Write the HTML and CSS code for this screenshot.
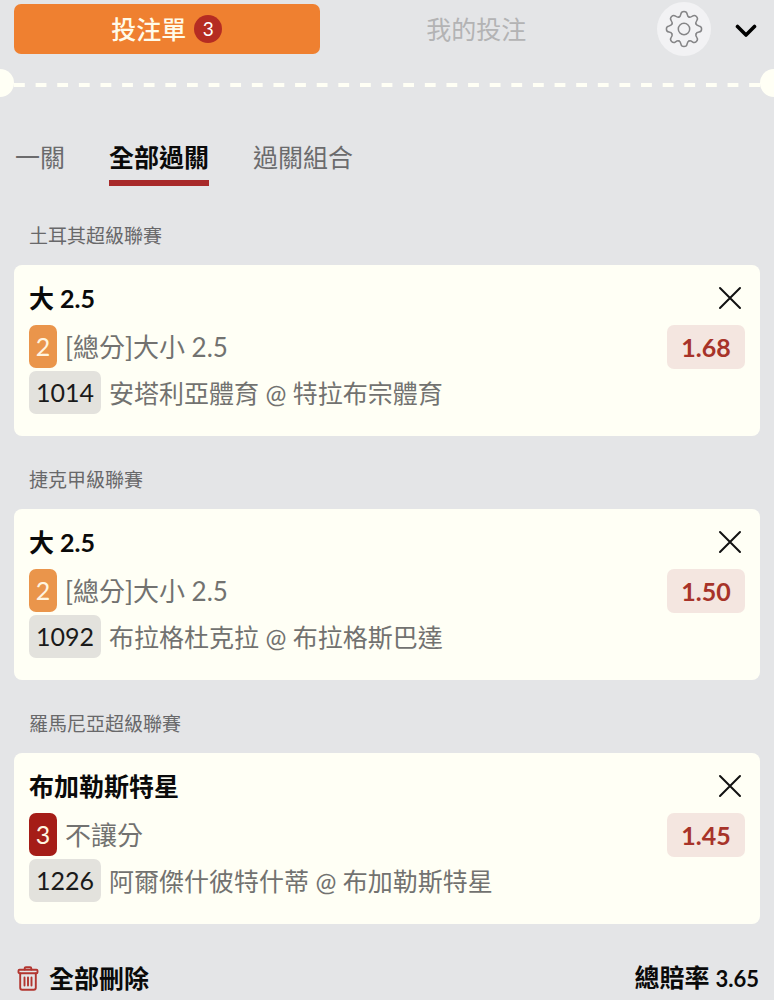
FILE: index.html
```
<!DOCTYPE html>
<html lang="zh-Hant">
<head>
<meta charset="utf-8">
<meta name="viewport" content="width=device-width, initial-scale=1">
<title>投注單</title>
<link rel="stylesheet" href="styles.css">
</head>
<body>
<header class="topbar">
  <button class="main-tab main-tab-active" type="button">投注單<span class="count">3</span></button>
  <button class="main-tab" type="button">我的投注</button>
  <div class="tools">
    <button class="settings" type="button" aria-label="設定">
      <svg width="38" height="38" viewBox="-19 -19 38 38" fill="none" stroke="#858587" stroke-width="1.5" stroke-linecap="round">
        <defs><path id="tooth" d="M-5 -12C-3.600 -12.500 -3.400 -13.400 -3.100 -15C-2.800 -17 -1.800 -17.600 0 -17.600C1.800 -17.600 2.800 -17 3.100 -15C3.400 -13.400 3.600 -12.500 5 -12"/></defs>
        <use href="#tooth"/>
        <use href="#tooth" transform="rotate(45)"/>
        <use href="#tooth" transform="rotate(90)"/>
        <use href="#tooth" transform="rotate(135)"/>
        <use href="#tooth" transform="rotate(180)"/>
        <use href="#tooth" transform="rotate(225)"/>
        <use href="#tooth" transform="rotate(270)"/>
        <use href="#tooth" transform="rotate(315)"/>
        <circle r="5.700"/>
      </svg>
    </button>
    <button class="collapse" type="button" aria-label="收合">
      <svg width="22" height="14" viewBox="0 0 22 14" fill="none" stroke="#000" stroke-width="3.600" stroke-linecap="round" stroke-linejoin="round"><path d="M2.500 2.500L11 11L19.500 2.500"/></svg>
    </button>
  </div>
</header>

<div class="tear">
  <svg class="tear-line" width="100%" height="4"><line x1="0" y1="2" x2="100%" y2="2" pathLength="69" stroke="#fffff5" stroke-width="4" stroke-dasharray="1 1"/></svg>
</div>

<nav class="modes">
  <button class="mode" type="button">一關</button>
  <button class="mode mode-active" type="button">全部過關</button>
  <button class="mode" type="button">過關組合</button>
</nav>

<main>
  <section>
    <h2 class="league">土耳其超級聯賽</h2>
    <article class="card">
      <div class="row row-title"><h3 class="pick">大 2.5</h3>
        <button class="close" type="button" aria-label="移除"><svg width="24" height="24" viewBox="0 0 24 24" stroke="#111" stroke-width="2" stroke-linecap="round"><path d="M2 2L22 22M22 2L2 22"/></svg></button></div>
      <div class="row"><span class="tag tag-orange">2</span><span class="market">[總分]大小 2.5</span><span class="odds">1.68</span></div>
      <div class="row row-match"><span class="code">1014</span><span class="match">安塔利亞體育 @ 特拉布宗體育</span></div>
    </article>
  </section>
  <section>
    <h2 class="league">捷克甲級聯賽</h2>
    <article class="card">
      <div class="row row-title"><h3 class="pick">大 2.5</h3>
        <button class="close" type="button" aria-label="移除"><svg width="24" height="24" viewBox="0 0 24 24" stroke="#111" stroke-width="2" stroke-linecap="round"><path d="M2 2L22 22M22 2L2 22"/></svg></button></div>
      <div class="row"><span class="tag tag-orange">2</span><span class="market">[總分]大小 2.5</span><span class="odds">1.50</span></div>
      <div class="row row-match"><span class="code">1092</span><span class="match">布拉格杜克拉 @ 布拉格斯巴達</span></div>
    </article>
  </section>
  <section>
    <h2 class="league">羅馬尼亞超級聯賽</h2>
    <article class="card">
      <div class="row row-title"><h3 class="pick">布加勒斯特星</h3>
        <button class="close" type="button" aria-label="移除"><svg width="24" height="24" viewBox="0 0 24 24" stroke="#111" stroke-width="2" stroke-linecap="round"><path d="M2 2L22 22M22 2L2 22"/></svg></button></div>
      <div class="row"><span class="tag tag-red">3</span><span class="market">不讓分</span><span class="odds">1.45</span></div>
      <div class="row row-match"><span class="code">1226</span><span class="match">阿爾傑什彼特什蒂 @ 布加勒斯特星</span></div>
    </article>
  </section>
</main>

<footer class="summary">
  <button class="clear" type="button">
    <svg width="22" height="25" viewBox="0 0 22 25" fill="none" stroke="#b23630" stroke-width="1.900" stroke-linejoin="round" stroke-linecap="round">
      <rect x="1.500" y="3.800" width="19" height="3.400" rx="1"/><path d="M7.700 3.500V2.400Q7.700 1.200 8.900 1.200H13.100Q14.300 1.200 14.300 2.400V3.500M3.200 7.500V21.800Q3.200 23.800 5.200 23.800H16.800Q18.800 23.800 18.800 21.800V7.500M7.500 11.500V19.500M11 11.500V19.500M14.500 11.500V19.500"/>
    </svg>全部刪除</button>
  <p class="total">總賠率 <span class="total-value">3.65</span></p>
</footer>
</body>
</html>
```
FILE: styles.css
```
* { box-sizing: border-box; }

body {
  margin: 0;
  background: #e4e5e7;
  color: #0a0a0a;
  font-family: Lato, "Noto Sans CJK TC", sans-serif;
  font-size: 25px;
  line-height: 38px;
}

button {
  margin: 0;
  padding: 0;
  border: 0;
  background: none;
  color: inherit;
  font: inherit;
  cursor: pointer;
}

svg { display: block; }
h2, h3, p { margin: 0; }

.topbar {
  display: flex;
  align-items: center;
  gap: 4px;
  padding: 2px 15px 0 14px;
}

.main-tab {
  flex: 1;
  display: flex;
  align-items: center;
  justify-content: center;
  gap: 8px;
  height: 50px;
  border-radius: 7px;
  color: #b3b3b4;
}

.main-tab-active {
  background: #ef8030;
  color: #fffbe9;
  font-weight: 500;
}

.count {
  width: 28px;
  height: 28px;
  border-radius: 50%;
  background: #b52c22;
  color: #fff;
  font-size: 19px;
  font-weight: 400;
  line-height: 28px;
}

.tools {
  display: flex;
  align-items: center;
  gap: 24px;
  padding-left: 24px;
}

.settings {
  display: grid;
  place-items: center;
  width: 54px;
  height: 54px;
  border-radius: 50%;
  background: #f2f2f4;
}

.collapse { padding: 3px 2px 0 0; }

.tear {
  position: relative;
  margin-top: 13px;
  padding: 14px 14px 11px;
  overflow: hidden;
}

.tear::before,
.tear::after {
  content: "";
  position: absolute;
  top: 0;
  width: 28px;
  height: 28px;
  border-radius: 50%;
  background: #fffff5;
}

.tear::before { left: -14px; }
.tear::after { right: -14px; }

.modes {
  display: flex;
  gap: 44px;
  padding: 40px 15px 0;
}

.mode {
  height: 48px;
  padding-bottom: 4px;
  border-bottom: 6px solid transparent;
  color: #6b6b6d;
}

.mode-active {
  border-color: #a82a2a;
  color: #0a0a0a;
  font-weight: 700;
}

main { padding: 6px 14px 0; }

.league {
  padding: 30px 15px 15px;
  color: #68686a;
  font-size: 19px;
  font-weight: 400;
  line-height: 28px;
}

.card {
  padding: 14px 15px 22px;
  border-radius: 8px;
  background: #fffff5;
}

.row {
  display: flex;
  align-items: center;
  gap: 8px;
  height: 43px;
}

.row-title {
  justify-content: space-between;
  height: 38px;
  margin-bottom: 8px;
}

.row-match { margin-top: 3px; }

.pick {
  font-size: 25px;
  font-weight: 700;
}

.close { padding: 3px; }

.tag,
.code {
  height: 43px;
  border-radius: 7px;
  line-height: 43px;
  text-align: center;
}

.tag {
  width: 28px;
  color: #fff5e0;
}

.tag-orange { background: #ea954b; }
.tag-red { background: #a51d17; }

.code {
  padding: 0 7px;
  background: #e3e2dd;
  color: #1a1a1a;
}

.market,
.match { color: #727270; }

.market { font-size: 26px; }

.odds {
  min-width: 78px;
  height: 44px;
  margin-left: auto;
  border-radius: 7px;
  background: #f4e6e0;
  color: #a73329;
  font-weight: 700;
  line-height: 44px;
  text-align: center;
}

.summary {
  display: flex;
  align-items: center;
  justify-content: space-between;
  padding: 34px 15px 0 17px;
  font-weight: 700;
}

.clear {
  display: flex;
  align-items: center;
  gap: 10px;
}

.total-value { font-size: 22px; }
```
